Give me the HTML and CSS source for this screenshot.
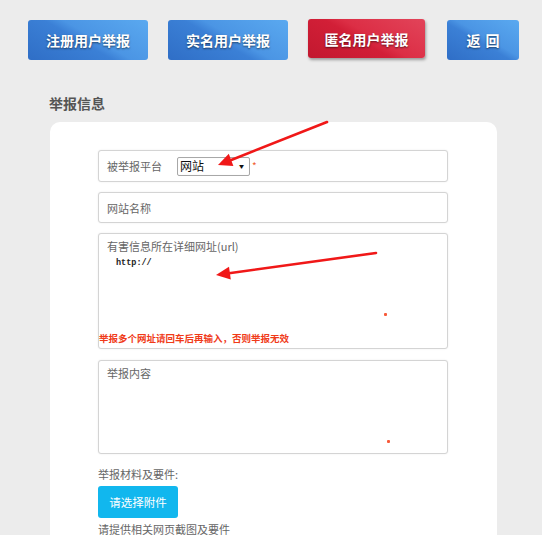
FILE: index.html
```html
<!DOCTYPE html>
<html lang="zh-CN">
<head>
<meta charset="utf-8">
<title>举报信息</title>
<link rel="stylesheet" href="styles.css">
</head>
<body>
<div class="page">
  <nav class="tabs">
    <a class="tab tab-blue tab-w1">注册用户举报</a>
    <a class="tab tab-blue tab-w1">实名用户举报</a>
    <a class="tab tab-red tab-w3">匿名用户举报</a>
    <a class="tab tab-blue tab-w4 tab-spaced">返回</a>
  </nav>

  <h2 class="section-title">举报信息</h2>

  <section class="card">
    <div class="field field-row">
      <span class="label label-fixed">被举报平台</span>
      <div class="select"><span class="select-text">网站</span><span class="select-caret">▼</span></div>
      <span class="req">*</span>
    </div>

    <div class="field field-row">
      <span class="label">网站名称</span>
    </div>

    <div class="field field-url">
      <div class="label">有害信息所在详细网址(url)</div>
      <div class="url-value">http://</div>
      <span class="dot dot-url"></span>
      <div class="warn">举报多个网址请回车后再输入，否则举报无效</div>
    </div>

    <div class="field field-content">
      <div class="label">举报内容</div>
      <span class="dot dot-content"></span>
    </div>

    <div class="attach-title">举报材料及要件:</div>
    <button class="attach-btn">请选择附件</button>
    <div class="attach-note">请提供相关网页截图及要件</div>
  </section>

  <svg class="arrows" width="542" height="535" viewBox="0 0 542 535">
    <line x1="327" y1="122" x2="230" y2="160.5" stroke="#f01818" stroke-width="2.6" stroke-linecap="round"/>
    <polygon points="218,165 228.8,153.8 233.4,166" fill="#f01818"/>
    <line x1="376" y1="253" x2="229" y2="273.2" stroke="#f01818" stroke-width="2.6" stroke-linecap="round"/>
    <polygon points="216,275 229,266.8 230.8,279.4" fill="#f01818"/>
  </svg>
</div>
</body>
</html>
```

FILE: styles.css
```css
html, body {
  margin: 0;
  padding: 0;
  overflow: hidden;
  background: #ececec;
}

body {
  font-family: "Noto Sans CJK SC", "Noto Sans", "Liberation Sans", sans-serif;
  color: #666;
}

.page {
  position: relative;
  width: 542px;
  height: 535px;
}

.tabs {
  display: flex;
  gap: 20px;
  padding: 20px 0 0 28px;
  align-items: flex-start;
}

.tab {
  display: flex;
  align-items: center;
  justify-content: center;
  height: 40px;
  border-radius: 3px;
  color: #fff;
  font-size: 14px;
  font-weight: bold;
  line-height: 1;
  text-shadow: 0 1px 2px rgba(0, 0, 0, 0.55);
  box-sizing: border-box;
}

.tab-blue {
  background: linear-gradient(30deg, #2f6ec6 0%, #3b80d6 45%, #4b95e4 55%, #5aa9f0 100%);
}

.tab-red {
  height: 39px;
  margin-top: -1px;
  background: linear-gradient(30deg, #c2182f 0%, #d21f37 45%, #dc2e45 55%, #e2445a 100%);
  box-shadow: 1px 2px 3px rgba(0, 0, 0, 0.35);
}

.tab-w1 { width: 120px; }
.tab-w3 { width: 117px; }
.tab-w4 { width: 72px; margin-left: 2px; }
.tab-spaced { letter-spacing: 5px; text-indent: 5px; }

.section-title {
  margin: 33px 0 0 49px;
  font-size: 14px;
  line-height: 20px;
  font-weight: bold;
  color: #555;
}

.card {
  margin: 9px 0 0 50px;
  width: 447px;
  height: 460px;
  background: #fff;
  border-radius: 10px;
  padding: 28px 49px 0 48px;
  box-sizing: border-box;
  display: flex;
  flex-direction: column;
}

.field {
  position: relative;
  background: #fff;
  border: 1px solid #d4d4d4;
  border-radius: 3px;
  box-shadow: 0 0 2px rgba(0, 0, 0, 0.08);
  box-sizing: border-box;
  margin-bottom: 10px;
}

.label {
  font-size: 11px;
  line-height: 16px;
  color: #666;
}

.field-row {
  display: flex;
  align-items: center;
  padding-left: 8px;
  height: 32px;
}

.field-row + .field-row {
  height: 31px;
  margin-bottom: 10px;
}

.label-fixed {
  width: 70px;
}

.select {
  display: flex;
  align-items: center;
  justify-content: space-between;
  width: 73px;
  height: 19px;
  border: 1px solid #a8a8a8;
  border-radius: 2px;
  box-sizing: border-box;
  padding: 0 5px 0 2px;
  background: #fff;
  box-shadow: inset 0 0 1px rgba(0, 0, 0, 0.1);
}

.select-text {
  font-size: 12px;
  line-height: 16px;
  color: #111;
}

.select-caret {
  font-size: 5px;
  line-height: 6px;
  color: #111;
}

.req {
  margin-left: 2px;
  color: #f06030;
  font-size: 10px;
  line-height: 10px;
}

.field-url {
  height: 116px;
  padding: 4px 0 0 8px;
  margin-bottom: 11px;
}

.url-value {
  margin: 3px 0 0 9px;
  font-family: "Liberation Mono", "DejaVu Sans Mono", monospace;
  font-size: 8.5px;
  font-weight: bold;
  line-height: 12px;
  color: #222;
}

.warn {
  position: absolute;
  left: 0;
  bottom: 3px;
  font-size: 9.5px;
  line-height: 14px;
  font-weight: bold;
  color: #f03a18;
}

.dot {
  position: absolute;
  width: 3px;
  height: 3px;
  border-radius: 1px;
  background: #f75a3a;
}

.dot-url { left: 285px; top: 79px; }
.dot-content { left: 288px; top: 79px; }

.field-content {
  height: 94px;
  padding: 4px 0 0 8px;
  margin-bottom: 12px;
}

.attach-title {
  font-size: 11px;
  line-height: 16px;
  color: #666;
}

.attach-btn {
  margin-top: 4px;
  width: 80px;
  height: 32px;
  border: none;
  border-radius: 3px;
  background: #11b7ee;
  color: #fff;
  font-family: inherit;
  font-size: 11.5px;
  padding: 0;
}

.attach-note {
  margin-top: 3px;
  font-size: 11px;
  line-height: 16px;
  color: #666;
}

.arrows {
  position: absolute;
  left: 0;
  top: 0;
  pointer-events: none;
}
```
